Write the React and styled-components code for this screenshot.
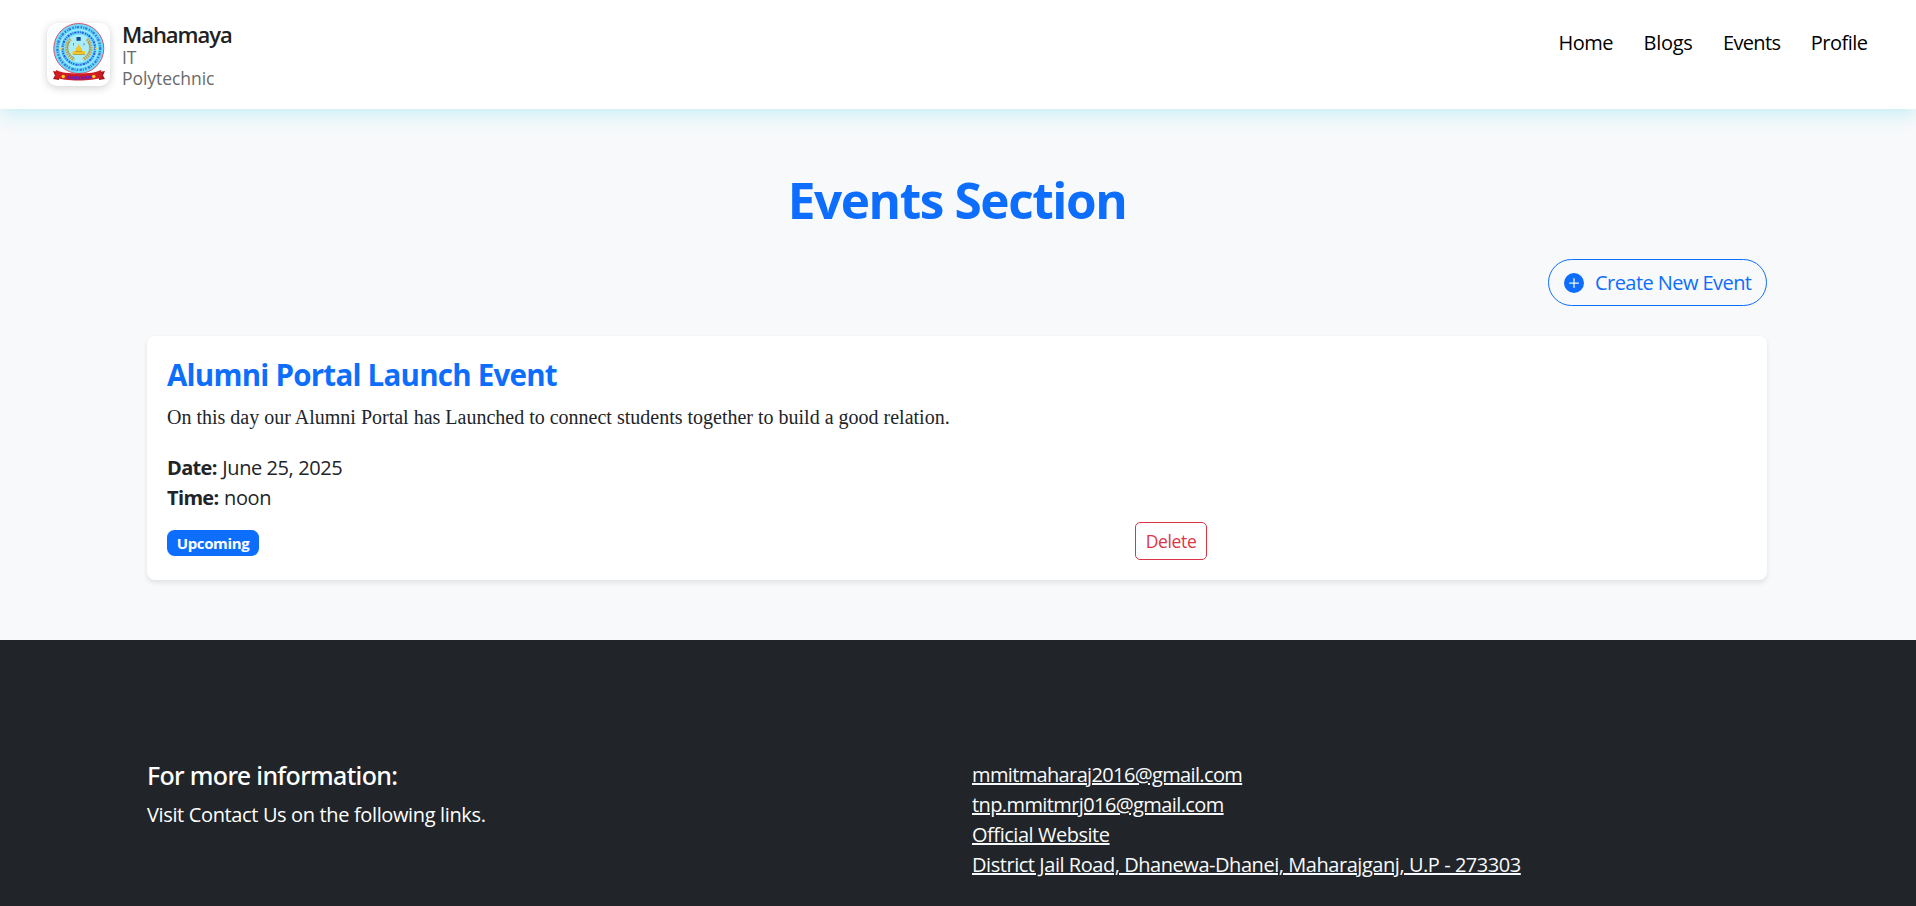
import React from 'react';
import styled, { createGlobalStyle } from 'styled-components';
import { BsPlusCircleFill } from 'react-icons/bs';

const GlobalStyle = createGlobalStyle`
  *, *::before, *::after { box-sizing: border-box; }
  body {
    margin: 0;
    background: #f8f9fb;
    color: #212529;
    font-family: 'Open Sans', 'Noto Sans', sans-serif;
    font-size: 20px;
    line-height: 30px;
    overflow: hidden;
  }
  h1, h2, h3, p, ul { margin: 0; padding: 0; }
`;

const Page = styled.div`
  min-height: 100vh;
  display: flex;
  flex-direction: column;
`;

const Header = styled.header`
  display: flex;
  justify-content: space-between;
  align-items: flex-start;
  height: 109px;
  padding: 22px 48.5px 0 47px;
  background: #fff;
  box-shadow: 0 4px 20px rgba(0, 200, 220, 0.23);
`;

const Brand = styled.div`
  display: flex;
  gap: 12px;
`;

const LogoBox = styled.div`
  width: 63px;
  height: 63px;
  margin-top: 1px;
  border-radius: 10px;
  background: #fff;
  box-shadow: 0 2px 8px rgba(0, 0, 0, 0.18);
  svg { display: block; }
`;

const BrandText = styled.div`
  display: flex;
  flex-direction: column;
  color: #6a6a6a;
  font-size: 17.5px;
  line-height: 21px;
  letter-spacing: -0.05px;
`;

const BrandName = styled.span`
  margin-bottom: 1px;
  color: #212121;
  font-size: 22px;
  font-weight: 600;
  line-height: 24px;
  letter-spacing: -1.05px;
`;

const Nav = styled.nav`
  display: flex;
  gap: 30.5px;
  padding-top: 6px;
`;

const NavLink = styled.a`
  color: #000;
  letter-spacing: ${(p) => p.$spacing}px;
`;

const Main = styled.main`
  width: 1620px;
  margin: 60px 0 60px 147px;
  display: flex;
  flex-direction: column;
`;

const Title = styled.h1`
  padding-top: 1px;
  height: 60px;
  color: #0d6efd;
  font-size: 49.5px;
  font-weight: 700;
  line-height: 60px;
  letter-spacing: -1.4px;
  text-align: center;
`;

const CreateButton = styled.button`
  align-self: flex-end;
  display: flex;
  align-items: center;
  gap: 11px;
  width: 219px;
  height: 47px;
  margin: 30px 0;
  padding: 0 0 0 15px;
  border: 1px solid #0d6efd;
  border-radius: 25px;
  background: transparent;
  color: #0d6efd;
  font: inherit;
  letter-spacing: -0.56px;
  white-space: nowrap;
  svg { flex: none; }
`;

const Card = styled.article`
  height: 244px;
  padding: 20px;
  border-radius: 8px;
  background: #fff;
  box-shadow: 0 2.5px 5px rgba(0, 0, 0, 0.09);
`;

const CardTitle = styled.h2`
  padding-top: 1px;
  margin-bottom: 9px;
  color: #0d6efd;
  font-size: 29.5px;
  font-weight: 700;
  line-height: 36px;
  letter-spacing: -0.76px;
`;

const Description = styled.p`
  margin-bottom: 21px;
  font-family: 'Liberation Serif', serif;
`;

const Detail = styled.p`
  display: flex;
  gap: 5.5px;
  letter-spacing: -0.42px;
  strong { font-weight: 700; letter-spacing: -0.65px; }
`;

const CardFooter = styled.div`
  display: grid;
  grid-template-columns: 968px auto;
  justify-items: start;
  align-items: start;
  margin-top: 9px;
`;

const Badge = styled.span`
  width: 92px;
  margin-top: 8px;
  border-radius: 7.5px;
  background: #0d6efd;
  color: #fff;
  font-size: 15px;
  font-weight: 700;
  line-height: 26px;
  letter-spacing: -0.35px;
  text-align: center;
`;

const DeleteButton = styled.button`
  width: 72px;
  height: 38px;
  padding: 0;
  border: 1px solid #dc3545;
  border-radius: 5px;
  background: transparent;
  color: #dc3545;
  font: inherit;
  font-size: 17.5px;
  letter-spacing: -0.35px;
`;

const Footer = styled.footer`
  flex: 1;
  display: grid;
  grid-template-columns: 825px 1fr;
  padding: 120px 0 0 147px;
  background: #212529;
  color: #fff;
`;

const FooterHeading = styled.h3`
  margin-bottom: 10px;
  font-family: 'Noto Sans', sans-serif;
  font-size: 25px;
  font-weight: 500;
  line-height: 30px;
  letter-spacing: -0.68px;
`;

const FooterText = styled.p`
  letter-spacing: -0.36px;
`;

const LinkList = styled.ul`
  list-style: none;
`;

const FooterLink = styled.a`
  color: #f8f9fa;
  text-decoration: underline;
  letter-spacing: ${(p) => p.$spacing}px;
`;

const navItems = [
  ['Home', -0.5],
  ['Blogs', -0.3],
  ['Events', -0.65],
  ['Profile', -0.52],
];

const links = [
  ['mmitmaharaj2016@gmail.com', -0.64],
  ['tnp.mmitmrj016@gmail.com', -0.6],
  ['Official Website', -0.46],
  ['District Jail Road, Dhanewa-Dhanei, Maharajganj, U.P - 273303', -0.45],
];

function Emblem() {
  return (
    <svg width="63" height="63" viewBox="0 0 63 63" fill="none">
      <circle cx="31.8" cy="25.5" r="25" fill="#6bdcfc" stroke="#d8526a" strokeWidth="1" />
      <circle cx="31.8" cy="25.5" r="21.4" stroke="#2f62cc" strokeWidth="2.4" strokeDasharray="1.6 1.2 1 .8 2.4 1.5" opacity=".8" />
      <circle cx="31.8" cy="25.5" r="18.7" stroke="#b4f0ff" strokeWidth="1" />
      <circle cx="31.8" cy="25.5" r="16.3" stroke="#1c3fdc" strokeWidth="2" strokeDasharray="1.5 .9 1 .8 2.2 1.1" opacity=".8" />
      <circle cx="31.8" cy="25.5" r="14" fill="#a8edf8" />
      <path d="M23.500 16c-6 6-5 17 4 20.500M40 16c6 6 5 17-4 20.500" stroke="#bda655" strokeWidth="3.400" strokeDasharray="1.600 .6" />
      <path d="M22 19c-3 6-1 12 5 15.500M41.500 19c3 6 1 12-5 15.500" stroke="#6e8c5a" strokeWidth="1" strokeDasharray="1 1.200" />
      <path d="M29.500 14h4.200v3.800h-4.200z" fill="#164892" />
      <path d="M26.500 20v2.500M37 20v2.500" stroke="#7d83b7" />
      <path d="M31.700 20.500l.8 2.500 2.500 2.500v2.500h3V31.500H25.500V28h3v-2.500l2.500-2.500z" fill="#f3c62a" />
      <path d="M26 31.500h12M28.500 28.500h6.500" stroke="#b08b2a" strokeWidth=".7" />
      <circle cx="14.200" cy="25.500" r="1.300" fill="#f4da45" />
      <circle cx="49.400" cy="25.500" r="1.300" fill="#f4da45" />
      <path d="M6 48l6 1v8l-6-1 2-3.500zM58 48l-6 1v8l6-1-2-3.500z" fill="#a7151c" />
      <path d="M9 47c8 4.800 37 4.800 45 0l1 7.500c-10 4-37 4-47 0z" fill="#cf1d22" />
      <path d="M20 54c7 1.300 17 1.300 24 0" stroke="#751db0" strokeWidth="3.200" strokeDasharray="3.200 .8 2.200 .8" />
      <circle cx="16.200" cy="53.500" r="1.700" fill="#ffce22" />
      <circle cx="46.800" cy="53.500" r="1.700" fill="#ffce22" />
    </svg>
  );
}

export default function App() {
  return (
    <Page>
      <GlobalStyle />
      <Header>
        <Brand>
          <LogoBox><Emblem /></LogoBox>
          <BrandText>
            <BrandName>Mahamaya</BrandName>
            <span>IT</span>
            <span>Polytechnic</span>
          </BrandText>
        </Brand>
        <Nav>
          {navItems.map(([label, spacing]) => (
            <NavLink key={label} $spacing={spacing}>{label}</NavLink>
          ))}
        </Nav>
      </Header>
      <Main>
        <Title>Events Section</Title>
        <CreateButton>
          <BsPlusCircleFill size={20} />
          Create New Event
        </CreateButton>
        <Card>
          <CardTitle>Alumni Portal Launch Event</CardTitle>
          <Description>
            On this day our Alumni Portal has Launched to connect students together to build a good relation.
          </Description>
          <Detail><strong>Date:</strong> <span>June 25, 2025</span></Detail>
          <Detail><strong>Time:</strong> <span>noon</span></Detail>
          <CardFooter>
            <Badge>Upcoming</Badge>
            <DeleteButton>Delete</DeleteButton>
          </CardFooter>
        </Card>
      </Main>
      <Footer>
        <div>
          <FooterHeading>For more information:</FooterHeading>
          <FooterText>Visit Contact Us on the following links.</FooterText>
        </div>
        <LinkList>
          {links.map(([label, spacing]) => (
            <li key={label}><FooterLink $spacing={spacing}>{label}</FooterLink></li>
          ))}
        </LinkList>
      </Footer>
    </Page>
  );
}
